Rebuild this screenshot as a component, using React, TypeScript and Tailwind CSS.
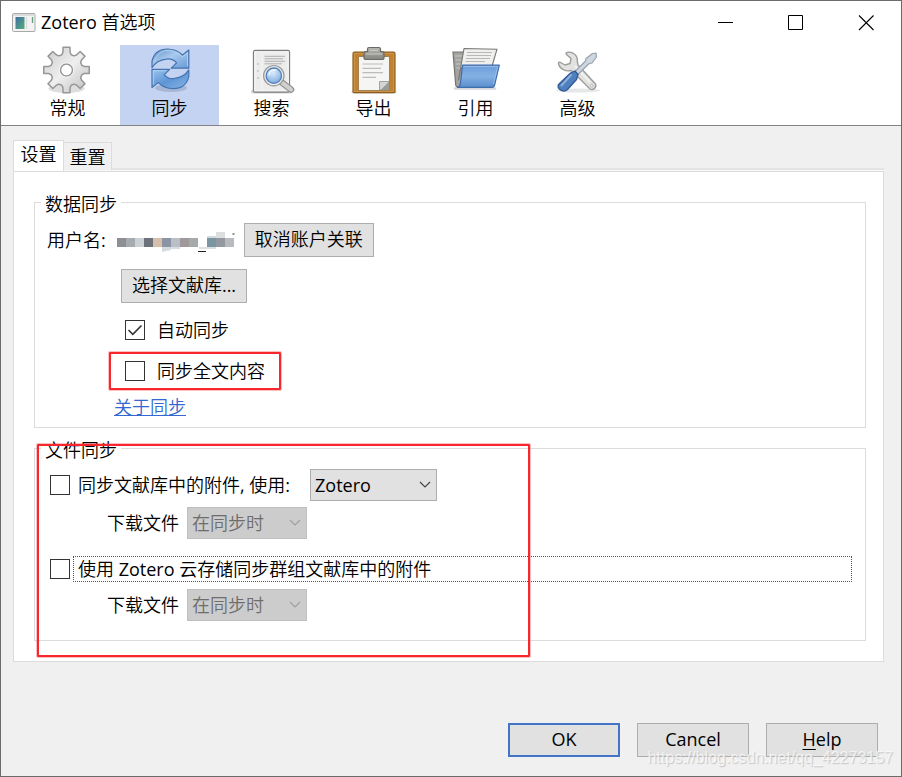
import type { ReactNode } from "react";

const gearPoints = (() => {
  const pts: string[] = [];
  for (let i = 0; i < 8; i++) {
    const base = (i * Math.PI) / 4;
    const parts = [
      [16, -0.3],
      [18, -0.2],
      [23, -0.15],
      [23, 0.15],
      [18, 0.2],
      [16, 0.3],
    ];
    parts.forEach(([r, a]) => {
      pts.push(`${(22.5 + r * Math.sin(base + a)).toFixed(2)},${(24 - r * Math.cos(base + a)).toFixed(2)}`);
    });
  }
  return pts.join(" ");
})();

function Icon({ children }: { children: ReactNode }) {
  return (
    <svg width="48" height="48" viewBox="0 0 48 48" fill="none" aria-hidden="true" className="block overflow-visible">
      {children}
    </svg>
  );
}

function GearIcon() {
  return (
    <Icon>
      <defs>
        <linearGradient id="gear" x1="0" y1="0" x2="1" y2="1">
          <stop offset="0" stopColor="#cacaca" />
          <stop offset="0.5" stopColor="#efefef" />
          <stop offset="1" stopColor="#bdbdbd" />
        </linearGradient>
      </defs>
      <ellipse cx="22.500" cy="42.500" rx="18" ry="4.500" fill="#dedede" />
      <polygon points={gearPoints} fill="url(#gear)" stroke="#979797" strokeWidth="1.500" strokeLinejoin="round" />
      <circle cx="22.500" cy="24" r="6" fill="#fff" stroke="#979797" strokeWidth="1.500" />
      <circle cx="22.500" cy="24" r="7.300" stroke="#f5f5f5" strokeWidth="1" />
    </Icon>
  );
}

function SyncIcon() {
  const arrow =
    "M6 21.7V15C8 7 14 3 21.5 3C28 3 33 5.5 36.5 9L42.8 4V22.2H25.2L30.6 16.8C27.5 13.5 23.5 12.5 20 13.2C13.5 14 9 17 6 21.7Z";
  return (
    <Icon>
      <defs>
        <linearGradient id="syncA" x1="0" y1="0" x2="1" y2="1">
          <stop offset="0" stopColor="#5d8dc9" />
          <stop offset="0.45" stopColor="#a9caec" />
          <stop offset="1" stopColor="#6398d5" />
        </linearGradient>
        <linearGradient id="syncB" x1="1" y1="1" x2="0" y2="0">
          <stop offset="0" stopColor="#9cc4ee" />
          <stop offset="0.5" stopColor="#5f96d6" />
          <stop offset="1" stopColor="#86b3e4" />
        </linearGradient>
      </defs>
      <ellipse cx="25" cy="42" rx="16" ry="4" fill="#a6b6d4" />
      <path d={arrow} fill="url(#syncA)" stroke="#4474b1" strokeWidth="1.200" strokeLinejoin="round" />
      <path d="M8 16C11 8 16 4.500 22 4.500C28 4.500 33 7.500 36.500 11L41.500 7V20.500" stroke="#bdd7f2" strokeWidth="0.800" />
      <g transform="rotate(180 24.4 22.8)">
        <path d={arrow} fill="url(#syncB)" stroke="#4474b1" strokeWidth="1.200" strokeLinejoin="round" />
        <path d="M41.500 7V20.800H28.500" stroke="#bdd7f2" strokeWidth="0.800" />
      </g>
    </Icon>
  );
}

function SearchIcon() {
  return (
    <Icon>
      <defs>
        <radialGradient id="lens" cx="0.450" cy="0.300" r="0.800">
          <stop offset="0" stopColor="#dcecfb" />
          <stop offset="0.600" stopColor="#9cc1ea" />
          <stop offset="1" stopColor="#6c9cd6" />
        </radialGradient>
      </defs>
      <rect x="3" y="44" width="41" height="3.500" rx="1.700" fill="#d0d0d0" />
      <rect x="5.500" y="4.500" width="36" height="41.500" rx="1.500" fill="#ececec" stroke="#7e7e7e" strokeWidth="1.300" />
      <rect x="6.800" y="5.800" width="33.400" height="39" fill="none" stroke="#fbfbfb" strokeWidth="1" />
      <path d="M14 7V45" stroke="#fafafa" strokeWidth="0.800" />
      <path d="M16.500 10.300H37M16.500 12.800H35M16.500 15.300H37M16.500 17.800H34" stroke="#b0b0b0" strokeWidth="1" />
      <path d="M9 18H11M9 25H11M9 32H11" stroke="#b0b0b0" strokeWidth="1" />
      <path d="M34.500 37L43 43.500" stroke="#8c8c8c" strokeWidth="6.500" strokeLinecap="round" />
      <path d="M34.500 37L43 43.500" stroke="#cfcfcf" strokeWidth="4.200" strokeLinecap="round" />
      <circle cx="25.800" cy="29.700" r="10.200" fill="#e9ebec" stroke="#9a9a9a" strokeWidth="1.200" />
      <circle cx="25.800" cy="29.700" r="7.700" fill="url(#lens)" stroke="#5580bb" strokeWidth="1.300" />
      <path d="M21 29C21 25 24 23.500 28 24" stroke="#f2f8ff" strokeWidth="1.500" strokeLinecap="round" />
    </Icon>
  );
}

function ExportIcon() {
  return (
    <Icon>
      <defs>
        <linearGradient id="clip" x1="0" y1="0" x2="0" y2="1">
          <stop offset="0" stopColor="#b8b8b4" />
          <stop offset="1" stopColor="#85857f" />
        </linearGradient>
      </defs>
      <rect x="1.500" y="44.500" width="45" height="3" rx="1.500" fill="#d4d0ca" />
      <rect x="3" y="6.200" width="42" height="40.500" rx="1.500" fill="#c08130" stroke="#8c5d1f" strokeWidth="1.200" />
      <rect x="4.300" y="7.500" width="39.400" height="38" fill="none" stroke="#cf9748" strokeWidth="0.900" />
      <path d="M8.500 10.500H39.500V44.500H8.500Z" fill="#f5f5f4" stroke="#9b7a4c" strokeWidth="0.900" />
      <path d="M12.500 18H33M12.500 22.300H31M12.500 26.700H33M12.500 31.300H26" stroke="#bcbcba" strokeWidth="1.200" />
      <path d="M29.500 44V35.500H39V36L31 44Z" fill="#d5d5d2" stroke="#92928e" strokeWidth="0.800" />
      <path d="M31 44L39 36V44Z" fill="#9c9c97" />
      <path
        d="M17.500 3Q17.500 1.500 19 1.500H29Q30.500 1.500 30.500 3V5.700H32.500Q34 5.700 34 7.500V11.500Q34 13.500 32 13.500H16Q14 13.500 14 11.500V7.500Q14 5.700 15.500 5.700H17.500Z"
        fill="url(#clip)"
        stroke="#6a6a66"
        strokeWidth="1.200"
      />
      <path d="M20 4.500H28M16 8H32" stroke="#c9c9c6" strokeWidth="1" />
    </Icon>
  );
}

function FolderIcon() {
  return (
    <Icon>
      <defs>
        <linearGradient id="folder" x1="0" y1="0" x2="0" y2="1">
          <stop offset="0" stopColor="#6b9ddb" />
          <stop offset="0.500" stopColor="#84b0e3" />
          <stop offset="1" stopColor="#5a8fce" />
        </linearGradient>
      </defs>
      <path d="M3 42.500H43" stroke="#d6d8db" strokeWidth="2.500" strokeLinecap="round" />
      <path d="M1 6H11L13 9V40L5.500 41Q4 41 3.700 39Z" fill="#a3a3a0" stroke="#757572" strokeWidth="1.200" />
      <path d="M3 10H10M3.500 14H10M4 18H10M4.500 22H9" stroke="#c6c6c3" strokeWidth="1" />
      <path d="M12 2.500L45 3.200L39.500 22H9L6.500 34Z" fill="#efefee" stroke="#777" strokeWidth="1.100" strokeLinejoin="round" />
      <path d="M15 6.500H40M14.500 9.500H39M14 12.500H38M13.500 15.500H33" stroke="#b8b8b8" strokeWidth="1" />
      <path d="M10.500 19.200H47.300L42.500 39.500Q42 41.300 40 41.300H5.500Q8 40.500 8.500 37Z" fill="url(#folder)" stroke="#3f6dab" strokeWidth="1.200" strokeLinejoin="round" />
      <path d="M11.600 20.500H45.700L41.500 38" stroke="#9fc2ea" strokeWidth="0.800" />
    </Icon>
  );
}

function ToolsIcon() {
  return (
    <Icon>
      <ellipse cx="24" cy="44.500" rx="22" ry="2" fill="#e6e7e9" />
      <path
        d="M13 6.500C18 5 24 9 23.300 15L24 19L41.500 38C43 41 39 45 36 43L17.500 24.500C12 26 5.500 23 4.500 17.500Q4.500 15.500 6.500 16.500L11 19L16 17.500L17 12.500L12.500 8.500Q11.500 7 13 6.500Z"
        fill="#e2e3e1"
        stroke="#9c9e9b"
        strokeWidth="1.400"
        strokeLinejoin="round"
      />
      <path d="M21 20L36 36" stroke="#f5f5f5" strokeWidth="1.500" />
      <circle cx="37.700" cy="39.700" r="1.300" fill="#fff" stroke="#999" strokeWidth="0.700" />
      <path d="M38.500 7.500L42 7L42.500 11L38 17L34.500 18L23.500 29L20.500 26L31.500 15L32 12.500Z" fill="#ced6e0" stroke="#98a2b0" strokeWidth="1.200" strokeLinejoin="round" />
      <path d="M16.500 27L21 25L24 28.500L22.500 33.500L13.500 43.500C10 47 2.500 43.500 4.500 38.500Z" fill="#4f7fbd" stroke="#2f5a97" strokeWidth="1.300" strokeLinejoin="round" />
      <path d="M17 29L7.500 39.500" stroke="#8bb0dd" strokeWidth="2" strokeLinecap="round" />
    </Icon>
  );
}

function AppIcon() {
  return (
    <svg width="24" height="20" viewBox="0 0 24 20" fill="none" aria-hidden="true">
      <rect x="0.500" y="0.500" width="22.500" height="18" rx="1" fill="#f3f3f3" stroke="#a8a8a8" />
      <path d="M1 2H23" stroke="#d5d5d5" strokeWidth="1.500" />
      <rect x="3.500" y="4" width="9" height="12" fill="url(#appg)" />
      <path d="M14.500 4V16" stroke="#dcdcdc" strokeWidth="1.500" />
      <path d="M20.500 4V10" stroke="#5fa07f" strokeWidth="1.300" />
      <defs>
        <linearGradient id="appg" x1="0" y1="0" x2="1" y2="1">
          <stop offset="0" stopColor="#3e6fa0" />
          <stop offset="1" stopColor="#57ae7d" />
        </linearGradient>
      </defs>
    </svg>
  );
}

const tools = [
  { label: "常规", icon: <GearIcon /> },
  { label: "同步", icon: <SyncIcon />, active: true },
  { label: "搜索", icon: <SearchIcon /> },
  { label: "导出", icon: <ExportIcon /> },
  { label: "引用", icon: <FolderIcon /> },
  { label: "高级", icon: <ToolsIcon /> },
];

const maskCells = [
  ["#8e8f94", 0, 9], ["#a6abaf", 9, 9], ["#cbd1d4", 18, 9], ["#6d717c", 27, 9], ["#d6bfab", 36, 9],
  ["#8b94a5", 45, 9], ["#b9bfc6", 54, 9], ["#9f999b", 63, 9], ["#a6aaab", 72, 9],
  ["#7b96a2", 90, 9], ["#94989f", 99, 9], ["#b7bbc0", 108, 9],
] as const;

function MaskedName() {
  return (
    <svg width="119" height="20" viewBox="0 0 119 20" role="img" aria-label="username hidden" className="overflow-visible">
      {maskCells.map(([fill, x, w]) => (
        <rect key={x} x={x} y="8" width={w} height="9" fill={fill} />
      ))}
      <path d="M45 17H54V20L45 22Z" fill="#d6d9de" />
      <path d="M54 17H63V19H54Z" fill="#d9dcdf" />
      <path d="M99 2H108V8H99Z" fill="#dcdee0" />
      <path d="M90 6H99V8H90Z" fill="#d1dadd" />
      <path d="M82 17H99V19H82Z" fill="#dbe0e2" />
      <path d="M81 21.500H89M115.500 4H117.500" stroke="#222" strokeWidth="1" />
    </svg>
  );
}

function Check({ id, label, checked = false }: { id: string; label: string; checked?: boolean }) {
  return (
    <>
      <span className="grid size-5 shrink-0">
        <input
          id={id}
          type="checkbox"
          defaultChecked={checked}
          className="peer col-start-1 row-start-1 size-5 appearance-none border border-[#333] bg-white"
        />
        <svg viewBox="0 0 20 20" fill="none" aria-hidden="true" className="pointer-events-none invisible col-start-1 row-start-1 size-5 peer-checked:visible">
          <path d="M3.500 10L7.800 14.300L16.500 5.500" stroke="#333" strokeWidth="1.600" />
        </svg>
      </span>
      <label htmlFor={id}>{label}</label>
    </>
  );
}

function Dropdown({ id, value, disabled = false, wide = false }: { id: string; value: string; disabled?: boolean; wide?: boolean }) {
  return (
    <span className={wide ? "grid w-[127px]" : "grid w-[120px]"}>
      <select
        id={id}
        disabled={disabled}
        aria-label={value}
        className="col-start-1 row-start-1 h-8 appearance-none border border-[#adadad] bg-[#e1e1e1] px-1 disabled:border-[#bfbfbf] disabled:bg-[#ccc] disabled:text-[#6d6d6d] disabled:opacity-100"
      >
        <option>{value}</option>
      </select>
      <svg width="12" height="8" viewBox="0 0 12 8" fill="none" aria-hidden="true" className="pointer-events-none col-start-1 row-start-1 mr-1.5 self-center justify-self-end">
        <path d="M1 1L6 6L11 1" stroke={disabled ? "#a0a0a0" : "#444"} strokeWidth="1.200" />
      </svg>
    </span>
  );
}

export default function App() {
  const button = "h-[34px] border border-[#adadad] bg-[#e1e1e1] pb-0.5";
  const highlight = "pointer-events-none absolute rounded-[1px] border-2 border-[#f8272d] ring-1 ring-[#f8272d]/30";
  return (
    <div className="relative flex min-h-screen flex-col border border-[#6b6b6b] bg-[#f0f0f0] font-['Open_Sans','Noto_Sans_CJK_SC_DemiLight','Noto_Sans_CJK_SC_Light','Noto_Sans_CJK_SC',sans-serif] text-lg leading-6 text-black">
      <header className="flex h-11 items-center bg-white pl-[11px]">
        <AppIcon />
        <h1 className="ml-[5px] grow pb-0.5">Zotero 首选项</h1>
        <button aria-label="最小化" className="grid h-full w-[70px] place-items-center">
          <svg width="16" height="16" viewBox="0 0 16 16"><path d="M0 7.500H15" stroke="#000" /></svg>
        </button>
        <button aria-label="最大化" className="grid h-full w-[70px] place-items-center">
          <svg width="16" height="16" viewBox="0 0 16 16"><path d="M0.500 0.500H14.500V14.500H0.500Z" fill="none" stroke="#000" /></svg>
        </button>
        <button aria-label="关闭" className="grid h-full w-[70px] place-items-center">
          <svg width="16" height="16" viewBox="0 0 16 16"><path d="M1 0.500L15.500 15M15.500 0.500L1 15" stroke="#000" strokeWidth="1.100" /></svg>
        </button>
      </header>

      <nav className="flex gap-[3px] border-b border-[#838383] bg-white pl-[17px]">
        {tools.map((t) => (
          <button key={t.label} className={`flex h-20 w-[99px] flex-col items-center pt-px ${t.active ? "bg-[#c4d3f1]" : ""}`}>
            {t.icon}
            <span className="mt-0.5">{t.label}</span>
          </button>
        ))}
      </nav>

      <main className="px-3 pt-3.5 pr-[17px]">
        <div role="tablist" className="flex items-end border-b border-[#f8f8f8]">
          <button role="tab" aria-selected="true" className="-mb-px h-[31px] w-[51px] border border-b-0 border-[#dcdcdc] bg-white pb-1">设置</button>
          <button role="tab" aria-selected="false" className="h-7 w-12 border border-b-0 border-l-0 border-[#dcdcdc]">重置</button>
          <span className="h-0.5 grow bg-[#e4e4e4]" />
        </div>

        <section className="border border-[#dcdcdc] bg-white pt-4 pr-[17px] pb-5 pl-5">
          <fieldset className="border border-[#dcdcdc] pb-2">
            <legend className="ml-1.5 px-1 pt-1">数据同步</legend>
            <div className="mt-[7px] flex items-center pl-3">
              <span className="mr-[11px]">用户名:</span>
              <MaskedName />
              <button className={`${button} ml-2 w-[130px]`}>取消账户关联</button>
            </div>
            <button className={`${button} mt-3 ml-[86px] block w-[126px]`}>选择文献库...</button>
            <div className="mt-[15px] ml-[90px] flex items-center gap-3">
              <Check id="auto" label="自动同步" checked />
            </div>
            <div className="relative mt-[17px] ml-[90px] flex w-fit items-center gap-3">
              <Check id="fulltext" label="同步全文内容" />
              <span className={`${highlight} -inset-x-4 -inset-y-[7px]`} />
            </div>
            <a href="#about" className="mt-3 ml-[79px] block w-fit text-[#3367d1] underline">关于同步</a>
          </fieldset>

          <div className="relative mt-1.5">
            <fieldset className="border border-[#dcdcdc] pb-[19px]">
              <legend className="ml-1.5 px-1 pt-1">文件同步</legend>
              <div className="mt-[7px] flex items-center gap-2 pl-[15px]">
                <Check id="attachments" label="同步文献库中的附件, 使用:" />
                <span className="ml-3"><Dropdown id="storage" value="Zotero" wide /></span>
              </div>
              <div className="mt-1.5 flex items-center gap-2 pl-[72px]">
                <label htmlFor="download-own">下载文件</label>
                <Dropdown id="download-own" value="在同步时" disabled />
              </div>
              <div className="mt-[17px] mr-[13px] flex items-center gap-[3px] pl-[15px] [&>label]:grow [&>label]:border [&>label]:border-dotted [&>label]:border-[#555] [&>label]:pl-1">
                <Check id="group" label="使用 Zotero 云存储同步群组文献库中的附件" />
              </div>
              <div className="mt-[7px] flex items-center gap-2 pl-[72px]">
                <label htmlFor="download-group">下载文件</label>
                <Dropdown id="download-group" value="在同步时" disabled />
              </div>
            </fieldset>
            <span className={`${highlight} top-2.5 -bottom-4 left-[3px] w-[493px]`} />
          </div>
        </section>
      </main>

      <footer className="mt-auto flex justify-end gap-[17px] pt-4 pr-[23px] pb-[19px]">
        <button className="h-[34px] w-28 border-2 border-[#4472c4] bg-[#e1e1e1] pb-0.5">OK</button>
        <button className={`${button} w-28`}>Cancel</button>
        <button className={`${button} w-28`}><span className="underline underline-offset-3">H</span>elp</button>
      </footer>
      <span className="pointer-events-none absolute right-2 bottom-2 font-['Liberation_Sans',sans-serif] text-base leading-5 text-white/70 [text-shadow:1px_1px_1px_#c4c4c4]">
        https://blog.csdn.net/qq_42273157
      </span>
    </div>
  );
}
